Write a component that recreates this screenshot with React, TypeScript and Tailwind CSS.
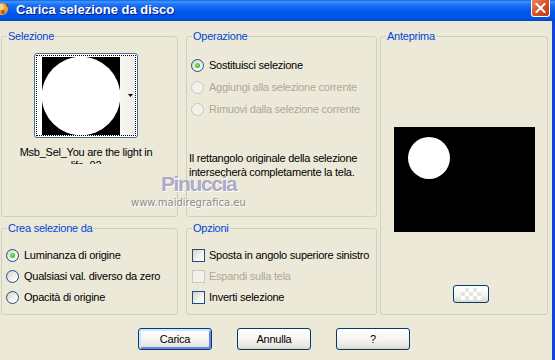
import React from "react";

function Radio({ checked, disabled }: { checked?: boolean; disabled?: boolean }) {
  return (
    <span
      className={
        disabled
          ? "relative inline-block shrink-0 w-[13px] h-[13px] rounded-full border border-[#CAC8BB] bg-[#F3F2EA]"
          : "relative inline-block shrink-0 w-[13px] h-[13px] rounded-full border border-[#1C5180] bg-[linear-gradient(135deg,#D6D2C4,#F4F3EE_60%,#FFFFFF)]"
      }
    >
      {checked && (
        <span className="absolute left-[3px] top-[3px] w-[5px] h-[5px] rounded-full bg-[radial-gradient(circle_at_40%_40%,#7CF07C,#21A121)]" />
      )}
    </span>
  );
}

function Check({ disabled }: { disabled?: boolean }) {
  return (
    <span
      className={
        disabled
          ? "inline-block shrink-0 w-[13px] h-[13px] border border-[#CAC8BB] bg-[#F3F2EA]"
          : "inline-block shrink-0 w-[13px] h-[13px] border border-[#1C5180] bg-[linear-gradient(135deg,#D6D2C4,#F4F3EE_60%,#FFFFFF)]"
      }
    />
  );
}

function Group({
  title,
  className,
  children,
}: {
  title: string;
  className: string;
  children?: React.ReactNode;
}) {
  return (
    <fieldset className={"border border-[#D0D0BF] rounded-[3px] min-w-0 " + className}>
      <legend className="ml-[5px] px-[1px] text-[#0046D5] leading-[14px]">{title}</legend>
      {children}
    </fieldset>
  );
}

function Btn({ label, def }: { label: string; def?: boolean }) {
  return (
    <div
      className={
        def
          ? "w-[74px] h-[22px] rounded-[3px] border border-[#003C74] bg-[linear-gradient(to_bottom,#FFFFFF,#F5F4F0_55%,#E6E3D8_90%,#D6D0C5)] shadow-[inset_1px_1px_0_1px_#CEE7FF,inset_-1px_-1px_0_1px_#6982EE] flex items-center justify-center"
          : "w-[74px] h-[22px] rounded-[3px] border border-[#003C74] bg-[linear-gradient(to_bottom,#FFFFFF,#F5F4F0_55%,#E6E3D8_90%,#D6D0C5)] flex items-center justify-center"
      }
    >
      {label}
    </div>
  );
}

function TitleBar() {
  return (
    <div className="h-[21px] shrink-0 flex items-start bg-[linear-gradient(to_bottom,#0A62E6_0%,#3D95FF_8%,#1F72F2_22%,#0058EE_55%,#0055E5_85%,#0046C9_100%)]">
      <svg width="10" height="18" viewBox="0 0 10 18" className="mt-[1px] shrink-0">
        <circle cx="2" cy="8" r="6" fill="#E9A23B" />
        <circle cx="1" cy="6" r="3" fill="#F5D77A" />
        <circle cx="3" cy="11" r="2" fill="#B3541E" />
        <path d="M6 2 L9 5 L7 6 Z" fill="#7A3D10" />
      </svg>
      <div className="ml-[6px] mt-[2px] text-white font-bold text-[13px] leading-[16px] tracking-[0px] [text-shadow:1px_1px_#0A1883]">
        Carica selezione da disco
      </div>
      <div className="flex-1" />
      <div className="mr-[5px] w-[19px] h-[17px] rounded-b-[3px] border border-t-0 border-white bg-[linear-gradient(135deg,#EE8A66,#D6502A_50%,#C03A14)] flex items-center justify-center">
        <svg width="11" height="10" viewBox="0 0 11 10">
          <path d="M1.5 1 L9.5 9 M9.5 1 L1.5 9" stroke="white" strokeWidth="2" strokeLinecap="square" />
        </svg>
      </div>
    </div>
  );
}

export default function App() {
  return (
    <div className="w-[555px] h-[360px] bg-[#ECE9D8] flex flex-col overflow-hidden font-['Liberation_Sans',Arial,sans-serif] text-[11px] tracking-[-0.25px] text-black">
      <TitleBar />
      <div className="flex flex-1">
        <div className="w-[552px] flex flex-col pl-[1px] pt-[8px] relative">
          <div className="flex items-start">
            {/* left column */}
            <div className="w-[177px] flex flex-col gap-[4px]">
              <Group title="Selezione" className="h-[188px]">
                <div className="ml-[32px] mt-[10px] w-[104px] h-[85px] rounded-[3px] border border-[#4A6E9A] bg-white p-[1px]">
                  <div className="h-full border border-dotted border-black flex items-stretch bg-white">
                    <div className="w-[5px] shrink-0" />
                    <div className="my-auto shrink-0">
                      <svg width="78" height="78" viewBox="0 0 78 78" className="block">
                        <rect width="78" height="78" fill="#000" />
                        <circle cx="39" cy="39" r="39.3" fill="#fff" />
                      </svg>
                    </div>
                    <div className="flex-1 bg-[linear-gradient(to_right,#F9F8F4,#EDECE6)] flex items-center justify-end pr-[2px]">
                      <svg width="5" height="3" viewBox="0 0 5 3">
                        <path d="M0 0 H5 L2.5 3 Z" fill="#000" />
                      </svg>
                    </div>
                  </div>
                </div>
                <div className="ml-[8px] mt-[8px] w-[152px] h-[18px] overflow-hidden text-center leading-[13px]">
                  Msb_Sel_You are the light in
                  <br />
                  life_02
                </div>
              </Group>
              <Group title="Crea selezione da" className="h-[94px]">
                <div className="ml-[4px] mt-[12px] flex flex-col gap-[4px]">
                  <div className="h-[17px] flex items-center gap-[5px]">
                    <Radio checked />
                    <span>Luminanza di origine</span>
                  </div>
                  <div className="h-[17px] flex items-center gap-[5px]">
                    <Radio />
                    <span>Qualsiasi val. diverso da zero</span>
                  </div>
                  <div className="h-[17px] flex items-center gap-[5px]">
                    <Radio />
                    <span>Opacità di origine</span>
                  </div>
                </div>
              </Group>
            </div>

            {/* middle column */}
            <div className="ml-[8px] w-[191px] flex flex-col gap-[4px]">
              <Group title="Operazione" className="h-[188px]">
                <div className="ml-[4px] mt-[14px] flex flex-col gap-[6px]">
                  <div className="h-[16px] flex items-center gap-[5px]">
                    <Radio checked />
                    <span>Sostituisci selezione</span>
                  </div>
                  <div className="h-[16px] flex items-center gap-[5px] text-[#ACA899]">
                    <Radio disabled />
                    <span>Aggiungi alla selezione corrente</span>
                  </div>
                  <div className="h-[16px] flex items-center gap-[5px] text-[#ACA899]">
                    <Radio disabled />
                    <span>Rimuovi dalla selezione corrente</span>
                  </div>
                </div>
                <div className="ml-[2px] mt-[34px] leading-[14px]">
                  Il rettangolo originale della selezione
                  <br />
                  intersecherà completamente la tela.
                </div>
              </Group>
              <Group title="Opzioni" className="h-[94px]">
                <div className="ml-[5px] mt-[12px] flex flex-col gap-[4px]">
                  <div className="h-[17px] flex items-center gap-[4px]">
                    <Check />
                    <span>Sposta in angolo superiore sinistro</span>
                  </div>
                  <div className="h-[17px] flex items-center gap-[4px] text-[#ACA899]">
                    <Check disabled />
                    <span>Espandi sulla tela</span>
                  </div>
                  <div className="h-[17px] flex items-center gap-[4px]">
                    <Check />
                    <span>Inverti selezione</span>
                  </div>
                </div>
              </Group>
            </div>

            {/* right column */}
            <Group title="Anteprima" className="ml-[3px] w-[168px] h-[286px]">
              <div className="mx-auto mt-[84px] w-[141px] h-[105px] bg-black">
                <svg width="141" height="105" viewBox="0 0 141 105" className="block">
                  <circle cx="35" cy="31" r="21" fill="#fff" />
                </svg>
              </div>
              <div className="ml-[72px] mt-[53px] w-[36px] h-[18px] rounded-[3px] border border-[#003C74] bg-[linear-gradient(to_bottom,#FFFFFF,#F3F2EC_60%,#DDD9CC)] flex items-center justify-center">
                <div className="w-[20px] h-[12px] bg-[conic-gradient(#E4E4E4_25%,#FFFFFF_0_50%,#E4E4E4_0_75%,#FFFFFF_0)] bg-[length:8px_8px]" />
              </div>
            </Group>
          </div>

          <div className="mt-[13px] pl-[137px] flex gap-[25px]">
            <Btn label="Carica" def />
            <Btn label="Annulla" />
            <Btn label="?" />
          </div>

          {/* watermark */}
          <div className="absolute left-[161px] top-[151px] text-[21px] leading-[24px] font-bold tracking-[-1.4px] text-[#ABABC6] [text-shadow:1px_1px_0_#FFFFFF]">
            Pinuccia
          </div>
          <div className="absolute left-[131px] top-[175px] font-['DejaVu_Sans',sans-serif] text-[10px] leading-[13px] tracking-[0px] text-[#8C8C8C] [text-shadow:1px_1px_0_#FFFFFF]">
            www.maidiregrafica.eu
          </div>
        </div>
        <div className="w-[3px] bg-[#0A49D6]" />
      </div>
    </div>
  );
}
